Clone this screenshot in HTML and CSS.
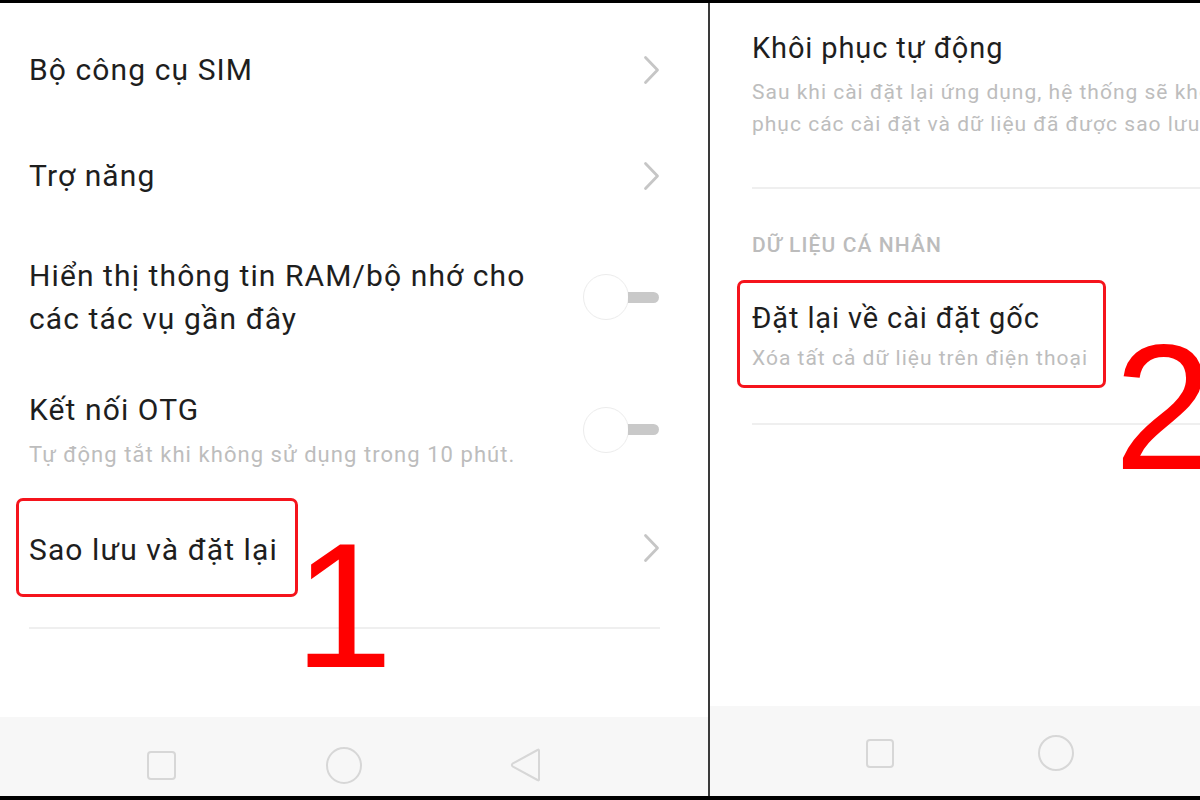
FILE: index.html
```html
<!DOCTYPE html>
<html lang="vi">
<head>
<meta charset="utf-8">
<title>Sao lưu và đặt lại</title>
<link rel="stylesheet" href="styles.css">
</head>
<body>
<div class="shot">
  <section class="phone phone--left">
    <div class="settings settings--left">
      <div class="row row--first">
        <span class="row__title">Bộ công cụ SIM</span>
        <svg class="chevron" viewBox="0 0 17 30" width="17" height="30"><polyline points="2.5,2.5 14.5,15 2.5,27.5"/></svg>
      </div>
      <div class="row row--2">
        <span class="row__title">Trợ năng</span>
        <svg class="chevron" viewBox="0 0 17 30" width="17" height="30"><polyline points="2.5,2.5 14.5,15 2.5,27.5"/></svg>
      </div>
      <div class="row row--3">
        <span class="row__title row__title--multi">Hiển thị thông tin RAM/bộ nhớ cho<br>các tác vụ gần đây</span>
        <span class="toggle"><span class="toggle__knob"></span><span class="toggle__track"></span></span>
      </div>
      <div class="row row--4">
        <div class="row__text">
          <div class="row__title">Kết nối OTG</div>
          <div class="row__sub">Tự động tắt khi không sử dụng trong 10 phút.</div>
        </div>
        <span class="toggle"><span class="toggle__knob"></span><span class="toggle__track"></span></span>
      </div>
      <div class="row row--5">
        <div class="mark mark--left">
          <span class="row__title">Sao lưu và đặt lại</span>
        </div>
        <svg class="chevron" viewBox="0 0 17 30" width="17" height="30"><polyline points="2.5,2.5 14.5,15 2.5,27.5"/></svg>
      </div>
      <div class="rule rule--left"></div>
    </div>
    <nav class="navbar navbar--left">
      <svg class="nav-ico nav-ico--sq" viewBox="0 0 29 29" width="29" height="29"><rect x="1" y="1" width="27" height="27" rx="3"/></svg>
      <svg class="nav-ico nav-ico--ci" viewBox="0 0 36 37" width="36" height="37"><ellipse cx="18" cy="18.5" rx="17" ry="17.5"/></svg>
      <svg class="nav-ico nav-ico--tr" viewBox="0 0 31 34" width="31" height="34"><path d="M29 2.5 L29 31.5 Q29 33 27.5 32 L2.5 18.3 Q1.2 17 2.5 15.7 L27.5 2 Q29 1 29 2.5 Z"/></svg>
    </nav>
    <span class="step step--1">1</span>
  </section>
  <div class="split"></div>
  <section class="phone phone--right">
    <div class="settings settings--right">
      <div class="row__title">Khôi phục tự động</div>
      <div class="row__sub row__sub--wide">Sau khi cài đặt lại ứng dụng, hệ thống sẽ khôi<br>phục các cài đặt và dữ liệu đã được sao lưu.</div>
      <div class="rule rule--right1"></div>
      <div class="section-head">DỮ LIỆU CÁ NHÂN</div>
      <div class="mark mark--right">
        <div class="row__title">Đặt lại về cài đặt gốc</div>
        <div class="row__sub row__sub--tight">Xóa tất cả dữ liệu trên điện thoại</div>
      </div>
      <div class="rule rule--right2"></div>
    </div>
    <nav class="navbar navbar--right">
      <svg class="nav-ico nav-ico--sq" viewBox="0 0 28 29" width="28" height="29"><rect x="1" y="1" width="26" height="27" rx="3"/></svg>
      <svg class="nav-ico nav-ico--ci" viewBox="0 0 36 36" width="36" height="36"><circle cx="18" cy="18" r="17"/></svg>
      <svg class="nav-ico nav-ico--tr" viewBox="0 0 31 34" width="31" height="34"><path d="M29 2.5 L29 31.5 Q29 33 27.5 32 L2.5 18.3 Q1.2 17 2.5 15.7 L27.5 2 Q29 1 29 2.5 Z"/></svg>
    </nav>
    <span class="step step--2">2</span>
  </section>
</div>
</body>
</html>
```
FILE: styles.css
```css
html, body {
  margin: 0;
  padding: 0;
  background: #000;
}

body {
  font-family: Roboto, "Noto Sans", "Liberation Sans", sans-serif;
}

.shot {
  display: flex;
  width: 1200px;
  height: 800px;
  box-sizing: border-box;
  border-top: 3px solid #000;
  border-bottom: 4px solid #000;
  background: #fff;
}

.phone {
  position: relative;
  display: flex;
  flex-direction: column;
  overflow: hidden;
  background: #fff;
}

.phone--left {
  width: 708px;
  flex: none;
}

.phone--right {
  flex: 1;
}

.split {
  width: 2px;
  flex: none;
  background: #3a3a3a;
}

.settings {
  flex: 1;
  display: flex;
  flex-direction: column;
}

.settings--left {
  padding: 47px 48px 0 29px;
}

.settings--right {
  padding: 25px 0 0 42px;
}

/* rows */
.row {
  display: flex;
  align-items: center;
  justify-content: space-between;
}

.row--2 { margin-top: 66px; }
.row--3 { margin-top: 58px; }
.row--4 { margin-top: 50px; }
.row--5 { margin-top: 29px; }

.row__title {
  font-size: 29px;
  line-height: 40px;
  letter-spacing: 0.88px;
  color: #1e1e1e;
  white-space: nowrap;
}

.settings--left .row__title {
  font-size: 30px;
  letter-spacing: 1.1px;
}

.row__title--multi {
  line-height: 43px;
}

.row__sub {
  margin-top: 11px;
  font-size: 22px;
  line-height: 28px;
  letter-spacing: 1.05px;
  color: #bdbdbd;
  white-space: nowrap;
}

.row__sub--wide {
  margin-top: 8px;
  font-size: 21px;
  line-height: 32px;
  letter-spacing: 1px;
}

.row__sub--tight {
  margin-top: 6px;
  font-size: 21px;
  letter-spacing: 1px;
}

.chevron {
  flex: none;
  fill: none;
  stroke: #c6c6c6;
  stroke-width: 2.8;
  stroke-linecap: round;
  stroke-linejoin: round;
}

/* switch */
.toggle {
  display: flex;
  align-items: center;
  flex: none;
  margin-right: 1px;
}

.toggle__knob {
  width: 44px;
  height: 44px;
  border-radius: 50%;
  border: 1.5px solid #ececec;
  background: #fff;
}

.toggle__track {
  width: 31px;
  height: 11px;
  margin-left: -1px;
  border-radius: 0 6px 6px 0;
  background: #c9c9c9;
}

/* red highlight */
.mark {
  box-sizing: border-box;
  border: 3px solid #f5141c;
  border-radius: 7px;
}

.mark--left {
  width: 282px;
  height: 99px;
  margin-left: -13px;
  padding: 29px 0 0 10px;
}

.mark--right {
  width: 369px;
  height: 108px;
  margin: 21px 0 0 -15px;
  padding: 15px 0 0 12px;
}

/* dividers */
.rule {
  height: 2px;
  background: #efefef;
}

.rule--left {
  margin-top: 30px;
}

.rule--right1 {
  margin-top: 47px;
}

.rule--right2 {
  margin-top: 35px;
}

.section-head {
  margin-top: 42px;
  font-size: 21px;
  line-height: 28px;
  font-weight: 500;
  color: #bcbcbc;
  letter-spacing: 1.1px;
}

/* navigation bar */
.navbar {
  flex: none;
  display: flex;
  align-items: center;
  background: #f7f7f7;
}

.navbar--left {
  height: 79px;
  box-sizing: border-box;
  padding: 17px 0 0 147px;
  gap: 150px;
}

.navbar--left .nav-ico--tr {
  margin-left: -2px;
}

.navbar--right {
  height: 90px;
  box-sizing: border-box;
  padding: 4px 0 0 156px;
  gap: 144px;
}

.nav-ico {
  flex: none;
  fill: none;
  stroke: #d7d7d7;
  stroke-width: 2;
  stroke-linejoin: round;
}

/* annotation numbers */
.step {
  position: absolute;
  font-family: "Liberation Sans", Arial, sans-serif;
  font-size: 178px;
  line-height: 178px;
  color: #ff0000;
}

.step--1 {
  left: 294px;
  top: 514px;
}

.step--2 {
  left: 404px;
  top: 316px;
}
```
